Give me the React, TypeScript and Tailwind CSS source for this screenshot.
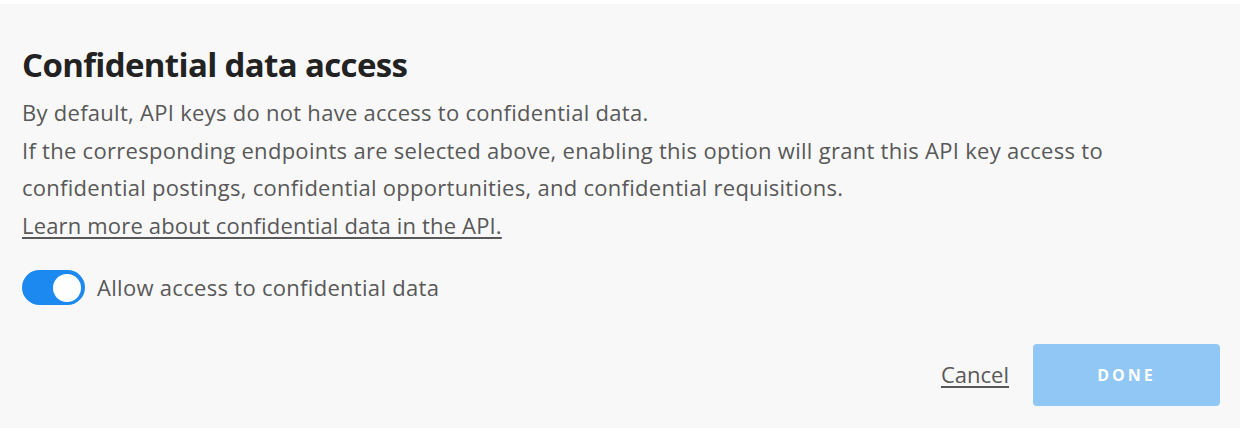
import { useState } from "react";

const font = { fontFamily: '"Open Sans", "Noto Sans", sans-serif' };

function Toggle({ on, onChange }: { on: boolean; onChange: (v: boolean) => void }) {
    return (
        <button
            type="button"
            role="switch"
            aria-checked={on}
            onClick={() => onChange(!on)}
            className={`flex h-[35px] w-[63px] shrink-0 items-center rounded-full px-[4px] ${on ? "justify-end bg-[#1b89ef]" : "justify-start bg-[#c9c9c9]"}`}
        >
            <span className="block h-[28px] w-[28px] rounded-full bg-white" />
        </button>
    );
}

export default function App() {
    const [allow, setAllow] = useState(true);

    return (
        <div className="h-[434px] w-[1244px] bg-white pt-[4px]" style={font}>
            <div className="flex h-[424px] w-[1240px] flex-col bg-[#f8f8f8] pl-[22px] pr-[20px] pt-[41px]">
                <h2 className="text-[33px] font-bold leading-[40px] tracking-[-0.65px] text-[#222]">Confidential data access</h2>
                <div className="mt-[9px] text-[22px] leading-[37.5px] tracking-[0.28px] text-[#585858]">
                    <p>By default, API keys do not have access to confidential data.</p>
                    <p>
                        If the corresponding endpoints are selected above, enabling this option will grant this API key access to
                        <br />
                        confidential postings, confidential opportunities, and confidential requisitions.
                    </p>
                    <a href="#" className="tracking-[0.17px] underline underline-offset-[3px]">Learn more about confidential data in the API.</a>
                </div>

                <label className="mt-[26px] flex items-center gap-[12px]">
                    <Toggle on={allow} onChange={setAllow} />
                    <span className="text-[22px] tracking-[0.3px] text-[#585858]">Allow access to confidential data</span>
                </label>

                <div className="mt-[39px] flex items-center justify-end gap-[24px]">
                    <button type="button" className="-mt-[2px] text-[22px] text-[#585858] underline underline-offset-[3px]">Cancel</button>
                    <button
                        type="button"
                        disabled
                        className="h-[62px] w-[187px] rounded-[4px] bg-[#90c7f5] text-[16px] font-bold tracking-[3px] text-white"
                    >
                        DONE
                    </button>
                </div>
            </div>
        </div>
    );
}
